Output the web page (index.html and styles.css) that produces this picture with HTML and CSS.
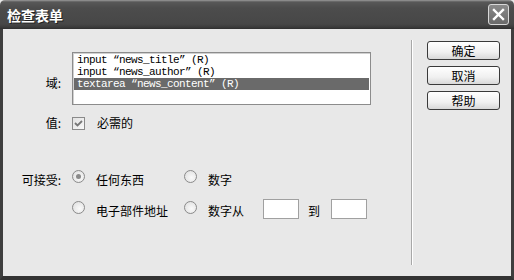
FILE: index.html
```html
<!DOCTYPE html>
<html lang="zh-CN">
<head>
  <meta charset="UTF-8">
  <title>检查表单</title>
  <link rel="stylesheet" href="styles.css">
</head>
<body>
  <div class="dialog">
    <div class="titlebar">
      <span class="title">检查表单</span>
      <span class="close">
        <svg width="13" height="13" viewBox="0 0 13 13"><path d="M2 2 L11 11 M11 2 L2 11" stroke="#fff" stroke-width="2.4" stroke-linecap="square"/></svg>
      </span>
    </div>

    <div class="content">
      <div class="form">
        <div class="row row-field">
          <span class="label">域:</span>
          <ul class="listbox">
            <li>input “news_title” (R)</li>
            <li>input “news_author” (R)</li>
            <li class="selected">textarea “news_content” (R)</li>
          </ul>
        </div>

        <div class="row row-value">
          <span class="label">值:</span>
          <span class="checkbox">
            <svg width="11" height="11" viewBox="0 0 11 11"><path d="M2 5 L4.5 7.5 L9 3" fill="none" stroke="#777" stroke-width="1.8"/></svg>
          </span>
          <span class="check-text">必需的</span>
        </div>

        <div class="row row-accept">
          <span class="label">可接受:</span>
          <div class="options">
            <div class="option"><span class="radio checked"></span><span>任何东西</span></div>
            <div class="option"><span class="radio"></span><span>数字</span></div>
            <div class="option"><span class="radio"></span><span>电子部件地址</span></div>
            <div class="option">
              <span class="radio"></span><span>数字从</span>
              <span class="num-input first"></span>
              <span class="to">到</span>
              <span class="num-input"></span>
            </div>
          </div>
        </div>
      </div>

      <div class="separator"></div>

      <div class="buttons">
        <button>确定</button>
        <button>取消</button>
        <button>帮助</button>
      </div>
    </div>
  </div>
</body>
</html>
```

FILE: styles.css
```css
* {
  box-sizing: border-box;
  margin: 0;
  padding: 0;
}

body {
  width: 514px;
  height: 280px;
  overflow: hidden;
  font-family: "Noto Sans CJK SC", "Liberation Sans", sans-serif;
  font-size: 12px;
  color: #000;
  background: #e8e8e8;
}

.dialog {
  display: flex;
  flex-direction: column;
  height: 280px;
}

.titlebar {
  height: 29px;
  display: flex;
  align-items: center;
  justify-content: space-between;
  padding: 0 5px 0 7px;
  background: linear-gradient(#9a9a9a 0, #7a7a7a 1px, #585858 2px, #4c4c4c 8px, #474747 24px, #3c3c3c 27px, #2e2e2e 29px);
  border-radius: 5px 5px 0 0;
}

.title {
  color: #fff;
  font-size: 14px;
  font-weight: bold;
  text-shadow: 1px 1px 0 #222;
  line-height: 16px;
  padding-top: 1px;
}

.close {
  width: 21px;
  height: 21px;
  display: flex;
  align-items: center;
  justify-content: center;
  border: 1px solid #d8d8d8;
  border-radius: 3px;
  background: linear-gradient(#8a8a8a, #6a6a6a);
}

.content {
  flex: 1;
  display: flex;
  border-left: 3px solid #3e3e3e;
  border-right: 3px solid #3e3e3e;
  border-bottom: 4px solid #333;
}

.form {
  flex: 1;
  padding-top: 23px;
}

.row {
  display: flex;
}

.label {
  width: 58px;
  margin-right: 11px;
  text-align: right;
  line-height: 16px;
}

.row-field .label {
  padding-top: 23px;
}

.listbox {
  list-style: none;
  width: 299px;
  height: 53px;
  padding: 1px;
  background: #fff;
  border: 1px solid #8c8c8c;
  box-shadow: inset 1px 1px 0 #d0d0d0;
  font-family: "Liberation Mono", monospace;
  font-size: 11px;
  letter-spacing: -0.6px;
}

.listbox li {
  height: 12px;
  line-height: 12px;
  padding-left: 3px;
  white-space: nowrap;
}

.listbox li.selected {
  background: #6a6a6a;
  color: #fff;
}

.row-value {
  margin-top: 10px;
  align-items: center;
}

.checkbox {
  width: 13px;
  height: 13px;
  display: flex;
  align-items: center;
  justify-content: center;
  border: 1px solid #8a8a8a;
  background: linear-gradient(135deg, #e2e2e2, #f8f8f8);
}

.check-text {
  margin-left: 12px;
  line-height: 16px;
}

.row-accept {
  margin-top: 37px;
}

.row-accept .label {
  padding-top: 4px;
}

.options {
  display: grid;
  grid-template-columns: 112px auto;
  row-gap: 11px;
}

.option {
  display: flex;
  align-items: center;
  height: 20px;
  gap: 11px;
  line-height: 16px;
}

.option span {
  padding-top: 3px;
}

.option .radio {
  width: 13px;
  height: 13px;
  padding: 0;
  margin-top: -3px;
  border-radius: 50%;
  border: 1px solid #8a8a8a;
  background: radial-gradient(circle at 60% 60%, #fafafa, #dcdcdc);
  display: flex;
  align-items: center;
  justify-content: center;
}

.option .radio.checked::after {
  content: "";
  width: 5px;
  height: 5px;
  border-radius: 50%;
  background: #8a8a8a;
}

.option .num-input {
  width: 36px;
  height: 20px;
  padding: 0;
  border: 1px solid #a0a0a0;
  background: #fff;
}

.option .num-input.first {
  margin-left: 8px;
}

.option .to {
  margin-left: -2px;
}

.separator {
  width: 2px;
  margin: 11px 0;
  border-left: 1px solid #a8a8a8;
  border-right: 1px solid #fff;
}

.buttons {
  display: flex;
  flex-direction: column;
  gap: 6px;
  padding: 12px 11px 0 14px;
}

button {
  width: 73px;
  height: 19px;
  font-family: "Noto Sans CJK SC", sans-serif;
  font-size: 12px;
  line-height: 15px;
  color: #000;
  border: 1px solid #3a3a3a;
  border-radius: 3px;
  background: linear-gradient(#ffffff, #f0f0f0 60%, #d8d8d8);
}
```
